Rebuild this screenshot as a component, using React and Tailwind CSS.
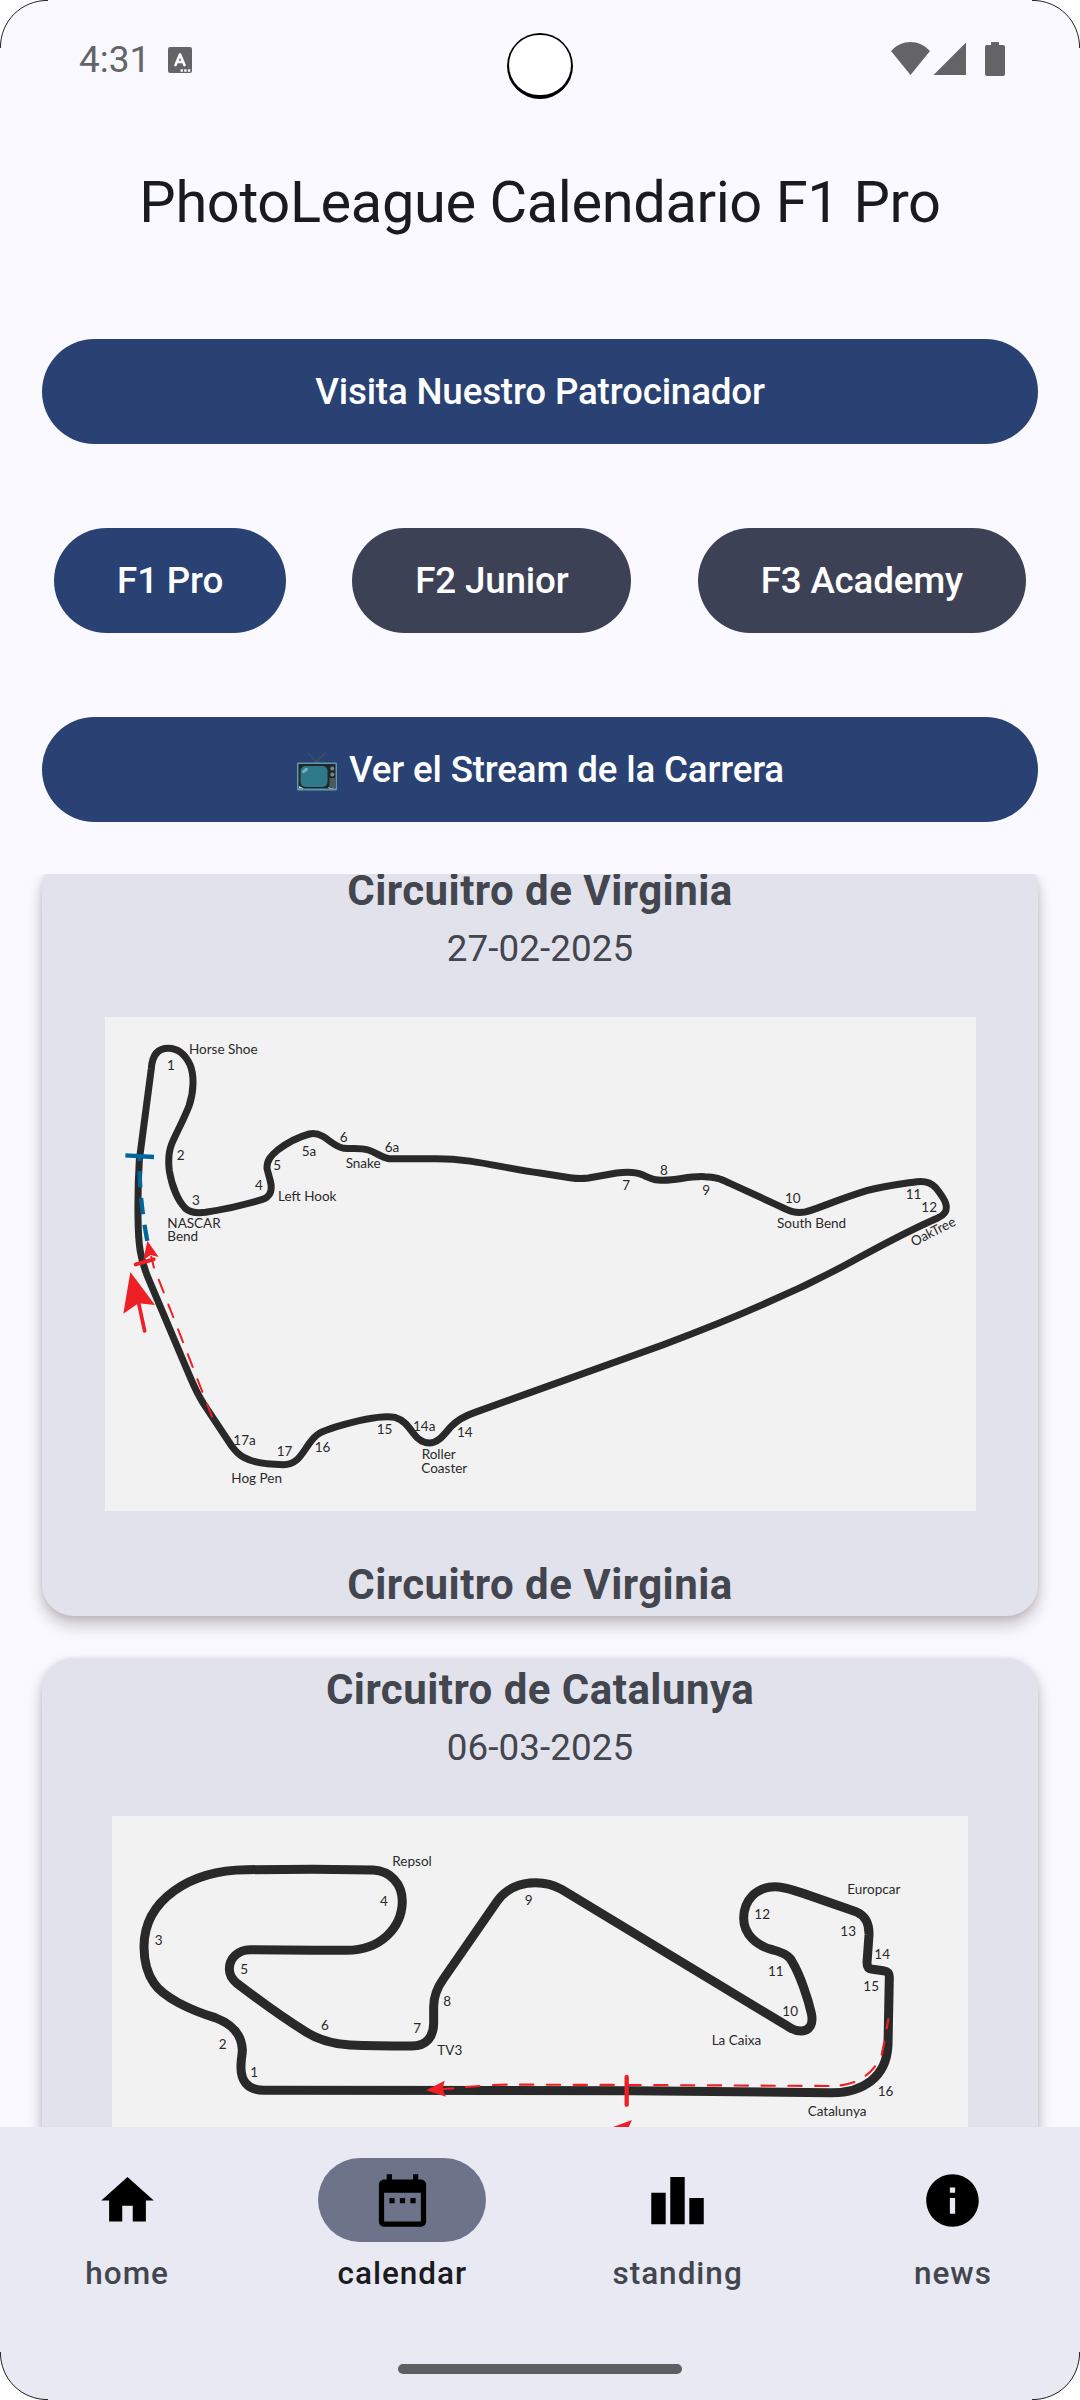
const NAV = [
  { label: "home", d: "M10 20v-6h4v6h5v-8h3L12 3 2 12h3v8z" },
  {
    label: "calendar",
    active: true,
    d: "M9 11H7v2h2v-2zm4 0h-2v2h2v-2zm4 0h-2v2h2v-2zm2-7h-1V2h-2v2H8V2H6v2H5c-1.11 0-1.99.9-1.99 2L3 20c0 1.1.89 2 2 2h14c1.1 0 2-.9 2-2V6c0-1.1-.9-2-2-2zm0 16H5V9h14v11z",
  },
  { label: "standing", d: "M7.5 21H2V9h5.5v12zm7.25-18h-5.5v18h5.5V3zM22 11h-5.5v10H22V11z" },
  {
    label: "news",
    d: "M12 2C6.48 2 2 6.48 2 12s4.48 10 10 10 10-4.48 10-10S17.52 2 12 2zm1 15h-2v-6h2v6zm0-8h-2V7h2v2z",
  },
];

// [text, x, baseline]
const VIRGINIA_LABELS = [
  ["Horse Shoe", 299, 162], ["1", 233, 210], ["2", 262, 480], ["3", 308, 615],
  ["NASCAR", 234, 684], ["Bend", 234, 723], ["4", 497, 570], ["5", 552, 510],
  ["Left Hook", 566, 603], ["5a", 637, 468], ["6", 751, 426], ["Snake", 769, 504],
  ["6a", 886, 456], ["17a", 432, 1335], ["17", 562, 1368], ["16", 676, 1356],
  ["Hog Pen", 426, 1449], ["15", 862, 1302], ["14a", 971, 1293], ["14", 1103, 1311],
  ["Roller", 997, 1377], ["Coaster", 996, 1419], ["7", 1599, 570], ["8", 1712, 525],
  ["9", 1839, 585], ["10", 2087, 609], ["South Bend", 2063, 684], ["11", 2449, 597],
  ["12", 2496, 636],
];

const CATALUNYA_LABELS = [
  ["Repsol", 879, 198], ["4", 842, 318], ["3", 166, 435], ["5", 423, 522],
  ["6", 665, 690], ["7", 942, 699], ["8", 1032, 618], ["TV3", 1014, 765],
  ["2", 358, 747], ["1", 453, 831], ["9", 1276, 315], ["12", 1965, 357],
  ["Europcar", 2244, 282], ["13", 2223, 408], ["14", 2325, 477], ["11", 2006, 528],
  ["15", 2292, 573], ["10", 2049, 648], ["La Caixa", 1837, 735], ["16", 2335, 888],
  ["Catalunya", 2125, 948],
];

function Labels({ items }) {
  return (
    <g fontFamily="Lato, sans-serif" fontSize="40.5" fill="#2a2a2a" transform="translate(-2 0)">
      {items.map(([t, x, y]) => (
        <text key={t + x} x={x} y={y}>{t}</text>
      ))}
    </g>
  );
}

function VirginiaTrack() {
  return (
    <svg viewBox="45 51 2613 1482" className="block h-[494px] w-[871px] bg-[#f2f2f2]">
      <path
        d="M148 480 L184 205 C187 165 205 145 235 145 C262 145 285 163 300 194 C313 225 312 275 297 318 C280 362 258 400 245 432 C236 455 234 480 238 513 C246 560 265 603 286 625 C300 638 320 640 347 637 C400 629 465 614 515 599 C538 592 546 578 543 553 C540 535 534 520 531 505 C530 480 545 465 562 451 C590 429 625 411 658 402 C672 398 684 401 698 409 C718 420 735 440 762 445 C790 447 810 443 835 450 C860 457 870 472 897 476 L1040 476 C1150 476 1240 505 1350 519 L1440 533 C1460 536 1475 537 1495 534 L1580 519 C1610 515 1635 515 1657 524 C1672 531 1685 539 1705 540 C1755 545 1790 527 1845 530 C1880 531 1895 539 1920 550 L2070 619 C2100 634 2115 640 2145 636 C2170 632 2230 603 2330 572 C2380 558 2440 551 2480 545 C2505 542 2522 546 2537 563 C2550 579 2562 594 2567 610 C2573 630 2566 643 2545 653 C2480 681 2400 722 2310 771 C2215 824 2110 874 2040 904 C1920 958 1830 993 1720 1034 L1320 1178 L1155 1237 C1120 1249 1100 1262 1083 1280 C1060 1306 1045 1329 1018 1329 C995 1329 982 1317 970 1300 C955 1280 942 1260 915 1252 C870 1244 800 1262 740 1280 C690 1296 680 1300 658 1330 C635 1362 622 1394 580 1394 C540 1394 490 1388 463 1373 C443 1363 435 1352 425 1338 L340 1210 C325 1186 315 1165 302 1135 L175 835 C150 775 145 735 144 650 C143 580 145 530 148 480 Z"
        fill="none" stroke="#292929" strokeWidth="21" strokeLinejoin="round"
      />
      <g fill="none" stroke="#00659a" strokeWidth="13">
        <path d="M106 466 L192 471" />
        <path d="M148 470 L149 483 M149 513 C150 590 160 660 172 723" strokeDasharray="49 32" />
      </g>
      <g fill="none" stroke="#ee2026" strokeLinecap="round">
        <path d="M366 1250 L191 800 L184 770" strokeWidth="6" strokeDasharray="41 39" />
        <path d="M137 793 L191 778" strokeWidth="12" />
        <path d="M164 993 L145 905" strokeWidth="11" />
      </g>
      <path d="M172 722 L206 771 L182 765 L160 780 Z M121 816 L195 915 L145 910 L100 941 Z" fill="#ee2026" />
      <Labels items={VIRGINIA_LABELS} />
      <text transform="translate(2471 740) rotate(-27)" fontFamily="Lato, sans-serif" fontSize="40.5" fill="#2a2a2a">
        OakTree
      </text>
    </svg>
  );
}

function CatalunyaTrack() {
  return (
    <svg viewBox="36 48 2568 1482" className="block h-[494px] w-[856px] bg-[#f2f2f2]">
      <path
        d="M2190 878 L1600 872 L490 871 C440 870 421 840 423 795 C424 770 427 765 427 750 C425 700 395 672 345 653 C270 630 190 592 162 550 C143 522 132 485 132 440 C132 300 270 210 440 209 L640 208 L820 210 C870 213 907 250 907 305 C905 385 840 451 740 451 L640 451 L450 449 C415 449 388 475 388 507 C388 525 396 538 412 551 C480 603 540 648 620 697 C660 722 700 732 750 735 C820 738 870 738 935 738 C980 738 1002 710 1001 665 L1001 620 C1001 590 1010 565 1030 537 L1192 303 C1217 267 1260 248 1307 248 C1337 248 1360 254 1385 268 L2065 680 C2080 690 2090 693 2103 693 C2130 692 2141 672 2134 640 C2124 595 2100 525 2078 488 C2070 468 2052 459 2020 450 C1970 438 1931 403 1931 355 C1931 300 1970 260 2025 260 C2055 260 2082 270 2270 336 C2297 348 2308 373 2307 405 L2301 488 C2301 501 2306 507 2318 508 L2350 512 C2364 514 2368 519 2368 532 L2364 735 C2360 830 2290 880 2190 878 Z"
        fill="none" stroke="#292929" strokeWidth="27"
      />
      <g fill="none" stroke="#ee2026" strokeLinecap="round" strokeWidth="6.5">
        <path d="M1060 865 L1030 867 M1098 861 L1138 858 M1179 855 L1220 854" />
        <path d="M1260 854 L1600 855 L2190 858" strokeDasharray="40 40.5" />
        <path d="M2222 856 Q2245 853 2263 846 M2297 827 Q2312 817 2325 799 M2345 764 L2353 725 M2360 685 L2365 658" />
        <path d="M1580 831 V914" strokeWidth="13" />
        <path d="M1480 1055 L1555 992" strokeWidth="11" />
      </g>
      <path d="M978 871 L1034 842 L1028 867 L1038 890 Z M1596 960 L1480 1003 L1530 1015 L1550 1062 Z" fill="#ee2026" />
      <Labels items={CATALUNYA_LABELS} />
    </svg>
  );
}

function RaceCard({ name, date, children }) {
  return (
    <article className="flex shrink-0 flex-col items-center rounded-[31.5px] bg-[#e2e2ec] text-[#43464e] shadow-[0_9px_16px_rgba(40,20,20,0.24),0_2px_7px_rgba(40,20,20,0.11)]">
      <h2 className="text-[42px] leading-[63px] font-bold tracking-[0.46px]">{name}</h2>
      <p className="mb-[41.5px] pt-px text-[36.75px] leading-[52.5px] tracking-[0.1px]">{date}</p>
      {children}
      <h2 className="mt-[42px] text-[42px] leading-[63px] font-bold tracking-[0.46px]">{name}</h2>
    </article>
  );
}

function TvIcon() {
  return (
    <svg viewBox="0 0 42 42" className="mr-[11px] h-[42px] w-[42px]">
      <path d="M12.5 3 L20 12 L29 3" fill="none" stroke="#465457" strokeWidth="1.1" />
      <path d="M16 13 Q20 9 25 13Z" fill="#465457" />
      <rect x="1" y="12.500" width="40" height="28" rx="1" fill="#5d98ad" />
      <rect x="2.500" y="14" width="37" height="24.500" fill="#1f2729" />
      <path d="M3 36 L8 38.500 H33 L32 37 L39 38.500 H3Z" fill="#b8e0ea" />
      <rect x="4.500" y="16" width="27" height="21" rx="5" fill="#2f7889" />
      <ellipse cx="9" cy="20.500" rx="3.500" ry="1.700" transform="rotate(-40 9 20.500)" fill="#75adb7" />
      <rect x="33.500" y="28" width="5.500" height="10" fill="#4b5a60" />
      <circle cx="36.300" cy="18.500" r="2" fill="#73858c" />
      <circle cx="36.300" cy="24.500" r="2" fill="#73858c" />
    </svg>
  );
}

const BUTTON =
  "flex h-[105px] items-center justify-center rounded-full pt-[2px] text-[36.75px] leading-none font-medium tracking-[-0.18px] text-white";

function StatusBar() {
  return (
    <div className="flex h-[118px] shrink-0 items-center justify-between pr-[75px] pl-[79px] text-[#646466]">
      <div className="flex items-center">
        <span className="text-[37px] leading-none">4:31</span>
        <svg viewBox="0 0 24 26" className="ml-[18px] mt-[2px] h-[26px] w-[24px]">
          <rect width="24" height="26" rx="2" fill="currentColor" />
          <path d="M7.500 18 L12 7.500 L16.500 18 M9 15 H15" fill="none" stroke="#f9f9ff" strokeWidth="2.700" strokeLinecap="round" strokeLinejoin="round" />
          <path d="M12.500 22.300h2.400v2.400h-2.400zM16.200 22.300h2.400v2.400h-2.400zM19.900 22.300h2.400v2.400h-2.400z" fill="#f9f9ff" />
        </svg>
      </div>
      <svg viewBox="0 0 114 34" className="h-[34px] w-[114px]" fill="currentColor">
        <path d="M0 9 C11 -3 28 -3 39 9 L19.500 33 Z M42.500 33 L75 0.500 V33 Z M100 0h8v3h4q2 0 2 2V32q0 2-2 2H96q-2 0-2-2V5q0-2 2-2h4Z" />
      </svg>
    </div>
  );
}

function Corner({ className }) {
  return (
    <svg viewBox="0 0 48 48" className={"absolute h-12 w-12 " + className}>
      <path d="M0 0 H48 C21 0 0 21 0 48 Z" fill="#fff" />
      <path d="M0.400 48 C0.400 21 21 0.400 48 0.400" fill="none" stroke="#222" strokeWidth="1" />
    </svg>
  );
}

export default function App() {
  return (
    <div className="relative flex h-[2400px] w-[1080px] flex-col overflow-hidden bg-[#f9f9ff] font-[Roboto,sans-serif]">
      <StatusBar />
      <h1 className="h-[221px] shrink-0 pt-[52px] text-center text-[57.75px] leading-[64px] tracking-[-0.38px] text-[#1a1b20]">
        PhotoLeague Calendario F1 Pro
      </h1>

      <div className="flex shrink-0 flex-col gap-[84px] px-[42px]">
        <button className={BUTTON + " bg-[#294173]"}>Visita Nuestro Patrocinador</button>
        <div className="-mx-[21px] flex justify-around">
          <button className={BUTTON + " bg-[#294173] px-[63px]"}>F1 Pro</button>
          <button className={BUTTON + " bg-[#3d4156] px-[63px]"}>F2 Junior</button>
          <button className={BUTTON + " bg-[#3d4156] px-[63px]"}>F3 Academy</button>
        </div>
        <button className={BUTTON + " bg-[#294173]"}>
          <TvIcon />
          Ver el Stream de la Carrera
        </button>
      </div>

      <main className="mt-[52px] flex h-[1253px] shrink-0 flex-col gap-[42px] overflow-hidden px-[42px]">
        <div className="-mt-[15px] flex shrink-0 flex-col gap-[42px]">
          <RaceCard name="Circuitro de Virginia" date="27-02-2025">
            <VirginiaTrack />
          </RaceCard>
          <RaceCard name="Circuitro de Catalunya" date="06-03-2025">
            <CatalunyaTrack />
          </RaceCard>
        </div>
      </main>

      <nav className="flex h-[273px] shrink-0 flex-col items-center bg-[#e8e9f3]">
        <div className="flex h-[237px] w-full gap-[21px] pt-[31px]">
          {NAV.map((item) => (
            <div key={item.label} className="flex flex-1 flex-col items-center">
              <div
                className={
                  "flex h-[84px] w-[168px] items-center justify-center rounded-full " +
                  (item.active ? "bg-[#6d7388]" : "")
                }
              >
                <svg viewBox="0 0 24 24" className="h-[63px] w-[63px]" fill="#000">
                  <path d={item.d} />
                </svg>
              </div>
              <span
                className={
                  "mt-[11px] text-[31.5px] leading-[42px] font-medium tracking-[0.98px] " +
                  (item.active ? "text-[#1a1b20]" : "text-[#43464e]")
                }
              >
                {item.label}
              </span>
            </div>
          ))}
        </div>
        <div className="h-[10px] w-[284px] rounded-full bg-[#5f5f63]" />
      </nav>

      <div className="absolute top-[33px] left-[507px] h-[66px] w-[66px] rounded-full bg-black px-[2px] pt-[2px] pb-[4px]">
        <div className="h-full w-full rounded-full bg-white" />
      </div>
      <Corner className="top-0 left-0" />
      <Corner className="top-0 right-0 rotate-90" />
      <Corner className="right-0 bottom-0 rotate-180" />
      <Corner className="bottom-0 left-0 -rotate-90" />
    </div>
  );
}
